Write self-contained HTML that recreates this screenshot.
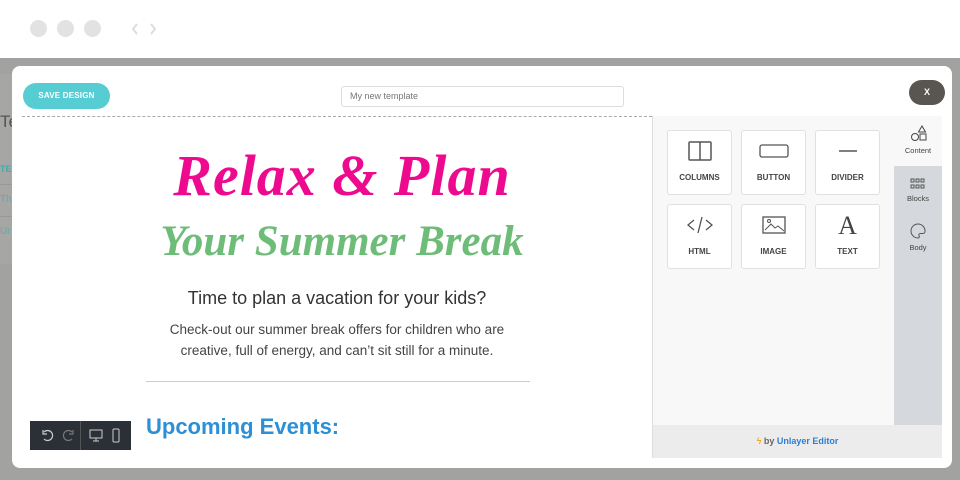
<!DOCTYPE html>
<html><head><meta charset="utf-8"><style>
*{box-sizing:border-box;margin:0;padding:0}
body{width:960px;height:480px;overflow:hidden;background:#a2a2a0;font-family:"Liberation Sans",sans-serif;position:relative}
.top{position:absolute;left:0;top:0;width:960px;height:58px;background:#fff}
.dot{position:absolute;top:20px;width:17px;height:17px;border-radius:50%;background:#e2e2e2}
.behind{position:absolute;left:0;top:74px;width:14px;height:190px;background:#a6a6a4}
.modal{position:absolute;left:12px;top:66px;width:940px;height:402px;background:#fff;border-radius:8px;overflow:hidden}
.save{position:absolute;left:11px;top:17px;width:87px;height:26px;border-radius:13px;background:#56cdd3;color:#fff;font-size:8px;font-weight:bold;text-align:center;line-height:26px;letter-spacing:.2px}
.inp{position:absolute;left:329px;top:20px;width:283px;height:21px;border:1px solid #ddd;border-radius:3px;font-size:9px;color:#777;padding-left:8px;line-height:19px}
.x{position:absolute;left:897px;top:14px;width:36px;height:25px;border-radius:13px;background:#595550;color:#fff;font-size:9px;font-weight:bold;text-align:center;line-height:25px}
.dash{position:absolute;left:10px;top:50px;width:630px;border-top:1px dashed #aaa}
.h1{position:absolute;left:0;width:660px;text-align:center;font-family:"Liberation Serif",serif;font-style:italic;font-weight:bold}
.panel{position:absolute;left:640px;top:50px;width:242px;height:309px;background:#f8f8f8;border-left:1px solid #ddd}
.tile{position:absolute;width:65px;height:65px;background:#fff;border:1px solid #e0e0e0;border-radius:3px;font-size:8px;font-weight:bold;color:#444;text-align:center}
.tile span{position:absolute;left:0;right:0;bottom:12px}
.tile svg{position:absolute;left:50%;transform:translateX(-50%);top:10px}
.side{position:absolute;left:882px;top:50px;width:48px;height:309px;background:#d5d8dc}
.side .act{position:absolute;left:0;top:0;width:48px;height:50px;background:#f8f8f8}
.lbl{position:absolute;left:0;width:48px;text-align:center;font-size:7.5px;color:#444}
.foot{position:absolute;left:640px;top:359px;width:290px;height:33px;background:#ececec;border-left:1px solid #ddd;font-size:9px;text-align:center;line-height:33px;color:#666;font-weight:bold}
.tb{position:absolute;left:18px;top:355px;width:101px;height:29px;background:#2b2f36}
</style></head><body>
<div class="top">
<div class="dot" style="left:30px"></div><div class="dot" style="left:57px"></div><div class="dot" style="left:84px"></div>
<svg style="position:absolute;left:130px;top:22px" width="28" height="14"><path d="M7 2 3 7 7 12M21 2 25 7 21 12" stroke="#ddd" stroke-width="2" fill="none"/></svg>
</div>
<div class="behind"></div>
<div style="position:absolute;left:0;top:112px;font-size:17px;color:#555">Te</div>
<div style="position:absolute;left:0;top:164px;font-size:9px;color:#4aa;font-weight:bold">TE</div>
<div style="position:absolute;left:0;top:184px;width:12px;border-top:1px solid #999"></div>
<div style="position:absolute;left:0;top:194px;font-size:10px;color:#6aa">Th</div>
<div style="position:absolute;left:0;top:216px;width:12px;border-top:1px solid #999"></div>
<div style="position:absolute;left:0;top:226px;font-size:10px;color:#6aa">Ur</div>
<div class="modal">
<div class="save">SAVE DESIGN</div>
<div class="inp">My new template</div>
<div class="x">X</div>
<div class="dash"></div>
<div class="h1" style="top:76px;font-size:58px;color:#ee0a8f;letter-spacing:1px">Relax &amp; Plan</div>
<div class="h1" style="top:151px;font-size:43px;color:#6dbd79">Your Summer Break</div>
<div style="position:absolute;left:0;width:650px;top:222px;text-align:center;font-size:18px;color:#333">Time to plan a vacation for your kids?</div>
<div style="position:absolute;left:0;width:650px;top:253px;text-align:center;font-size:13.5px;color:#444;line-height:21px">Check-out our summer break offers for children who are<br>creative, full of energy, and can’t sit still for a minute.</div>
<div style="position:absolute;left:134px;top:315px;width:384px;border-top:1px solid #ccc"></div>
<div style="position:absolute;left:134px;top:348px;font-size:22px;font-weight:bold;color:#2d8fd5">Upcoming Events:</div>
<div class="tb">
<svg width="101" height="29"><path d="M14 11a5 5 0 1 1 0 7M13 9v4h4" stroke="#ccc" stroke-width="1.2" fill="none"/><path d="M42 11a5 5 0 1 0 0 7M43 9v4h-4" stroke="#777" stroke-width="1.2" fill="none"/><line x1="50.5" y1="0" x2="50.5" y2="29" stroke="#555"/><rect x="60" y="9" width="12" height="8" stroke="#ccc" fill="none"/><path d="M66 17v3M63 20h6" stroke="#ccc"/><rect x="83" y="8" width="6" height="13" rx="1" stroke="#ccc" fill="none"/></svg>
</div>
<div class="panel">
<div class="tile" style="left:14px;top:14px"><svg width="24" height="20"><rect x="1" y="1" width="22" height="18" rx="1" stroke="#555" stroke-width="1.5" fill="none"/><line x1="12" y1="1" x2="12" y2="19" stroke="#555" stroke-width="1.5"/></svg><span>COLUMNS</span></div>
<div class="tile" style="left:88px;top:14px"><svg width="30" height="20"><rect x="1" y="4" width="28" height="12" rx="2" stroke="#555" stroke-width="1.3" fill="none"/></svg><span>BUTTON</span></div>
<div class="tile" style="left:162px;top:14px"><svg width="20" height="20"><line x1="1" y1="10" x2="19" y2="10" stroke="#555" stroke-width="1.5"/></svg><span>DIVIDER</span></div>
<div class="tile" style="left:14px;top:88px"><svg width="28" height="20"><path d="M8 5 2 10 8 15M20 5 26 10 20 15M16 2 12 18" stroke="#555" stroke-width="1.3" fill="none"/></svg><span>HTML</span></div>
<div class="tile" style="left:88px;top:88px"><svg width="24" height="20"><rect x="1" y="2" width="22" height="16" stroke="#555" stroke-width="1.3" fill="none"/><path d="M3 15l6-6 4 4 3-2 6 5" stroke="#555" fill="none"/><circle cx="7" cy="6" r="1.5" stroke="#555" fill="none"/></svg><span>IMAGE</span></div>
<div class="tile" style="left:162px;top:88px"><div style="position:absolute;left:0;right:0;top:6px;font-family:'Liberation Serif',serif;font-size:26px;font-weight:normal;color:#444">A</div><span>TEXT</span></div>
</div>
<div class="side"><div class="act"></div>
<svg style="position:absolute;left:16px;top:8px" width="18" height="18"><path d="M12 2 15.5 8h-7z" stroke="#444" fill="none"/><circle cx="5" cy="13" r="3.5" stroke="#444" fill="none"/><rect x="10" y="10" width="6" height="6" stroke="#444" fill="none"/></svg>
<div class="lbl" style="top:30px">Content</div>
<svg style="position:absolute;left:16px;top:62px" width="16" height="12"><g fill="none" stroke="#555"><rect x="1" y="1" width="3" height="3"/><rect x="6" y="1" width="3" height="3"/><rect x="11" y="1" width="3" height="3"/><rect x="1" y="7" width="3" height="3"/><rect x="6" y="7" width="3" height="3"/><rect x="11" y="7" width="3" height="3"/></g></svg>
<div class="lbl" style="top:78px">Blocks</div>
<svg style="position:absolute;left:16px;top:107px" width="16" height="16"><path d="M8 1a7 7 0 0 0 0 14c1.5 0 1.5-1.5 1-2.5s0-2 1.5-2H13a2 2 0 0 0 2-2A7 7 0 0 0 8 1z" stroke="#555" fill="none"/></svg>
<div class="lbl" style="top:127px">Body</div>
</div>
<div class="foot"><span style="color:#f5a623">ϟ</span> by <span style="color:#2d7fd5">Unlayer Editor</span></div>
</div>
</body></html>
